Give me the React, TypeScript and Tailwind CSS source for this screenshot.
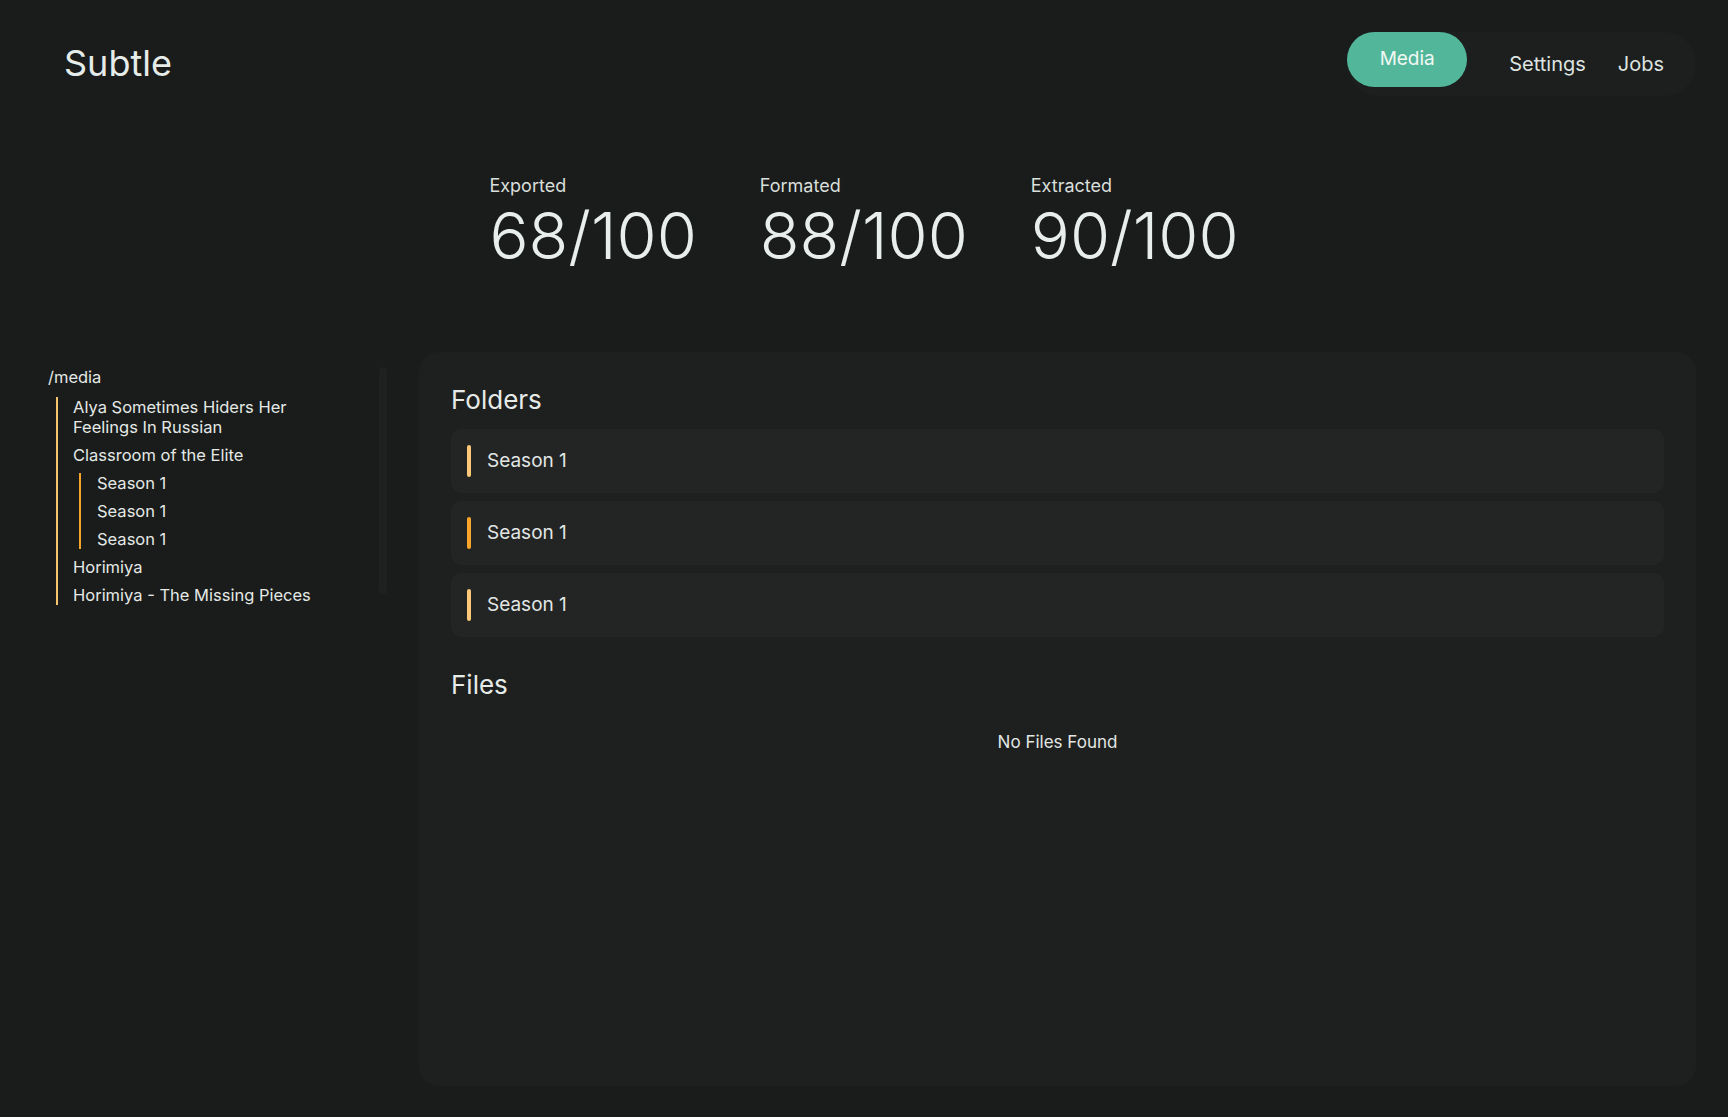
const folders = ["Season 1", "Season 1", "Season 1"]

const stats = [
    { label: "Exported", value: "68/100" },
    { label: "Formated", value: "88/100" },
    { label: "Extracted", value: "90/100" },
]

const App = () => {
    return (
        <div
            className="h-screen bg-[#1a1c1b] text-[#e4e9e6] flex flex-col px-8 pt-8 pb-[31px]"
            style={{ fontFamily: "Inter, 'Noto Sans', sans-serif" }}
        >
            {/* header */}
            <header className="flex items-start justify-between">
                <div className="ml-[32px] mt-[11px] text-[36px] leading-10 text-[#e6ece9]">Subtle</div>
                <nav className="flex h-16 items-center rounded-full bg-[#1d1f1e] pr-8">
                    <a className="flex h-[55px] w-[120px] self-start items-center justify-center rounded-full bg-[#52b79a] text-[19px] text-[#f2f7f4]">
                        Media
                    </a>
                    <a className="ml-[42px] text-[20px] text-[#dfe4e1]">Settings</a>
                    <a className="ml-8 text-[20px] text-[#dfe4e1]">Jobs</a>
                </nav>
            </header>

            {/* stats */}
            <div className="mt-[76px] flex justify-center gap-[63px]">
                {stats.map((s) => (
                    <div key={s.label} className="flex flex-col">
                        <span className="text-[18px] leading-7 text-[#d9dfdb]">{s.label}</span>
                        <span className="mt-[3px] text-[65px] font-light leading-none text-[#e8eeeb]">
                            {s.value}
                        </span>
                    </div>
                ))}
            </div>

            {/* body */}
            <div className="mt-[84px] flex min-h-0 flex-1 gap-8">
                <aside className="flex w-[355px] shrink-0 items-start justify-between">
                    <div className="flex w-[300px] flex-col gap-2 pl-4 pt-[13px] text-[16.5px] leading-5">
                        <div className="leading-6">/media</div>
                        <ul className="ml-2 flex flex-col gap-2 border-l-2 border-[#f6c46c] pl-[15px]">
                            <li>Alya Sometimes Hiders Her Feelings In Russian</li>
                            <li>Classroom of the Elite</li>
                            <ul className="ml-[6px] flex flex-col gap-2 border-l-2 border-[#f4a62a] pl-4">
                                <li>Season 1</li>
                                <li>Season 1</li>
                                <li>Season 1</li>
                            </ul>
                            <li>Horimiya</li>
                            <li>Horimiya - The Missing Pieces</li>
                        </ul>
                    </div>
                    <div className="mt-[15px] h-[227px] w-2 rounded-full bg-[#1f2120]" />
                </aside>

                <main className="flex flex-1 flex-col rounded-[20px] bg-[#1e201f] px-8 pt-8">
                    <h2 className="text-[26px] leading-8 text-[#e6ebe8]">Folders</h2>
                    <div className="mt-[13px] flex flex-col gap-2">
                        {folders.map((f, i) => (
                            <div key={i} className="flex h-16 items-center gap-4 rounded-[10px] bg-[#232524] px-4">
                                <span
                                    className={
                                        i === 1
                                            ? "h-8 w-1 rounded-full bg-[#f9a62b]"
                                            : "h-8 w-1 rounded-full bg-[#fdc878]"
                                    }
                                />
                                <span className="text-[19px] text-[#e2e7e4]">{f}</span>
                            </div>
                        ))}
                    </div>

                    <h2 className="mt-8 text-[26px] leading-8 text-[#e6ebe8]">Files</h2>
                    <p className="mt-[29px] text-center text-[17px] leading-6 text-[#e2e7e4]">No Files Found</p>
                </main>
            </div>
        </div>
    )
}

export default App
